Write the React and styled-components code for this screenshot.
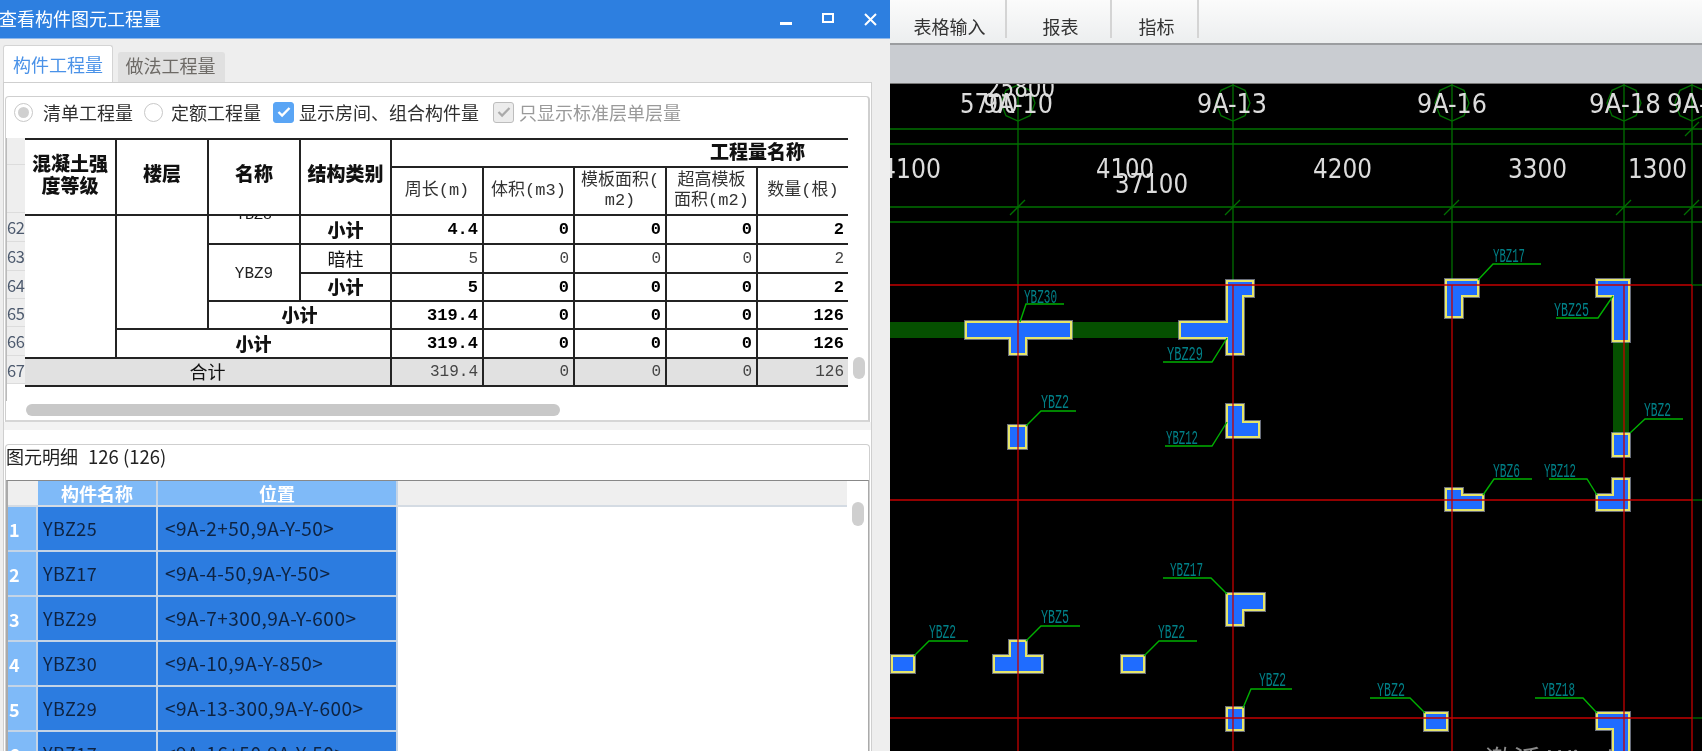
import React from 'react';
import styled, { createGlobalStyle } from 'styled-components';

const Global = createGlobalStyle`
  html, body { margin: 0; padding: 0; background: #000; overflow: hidden; }
  #root { width: 1702px; height: 751px; }
  * { box-sizing: border-box; }
`;
const CJK = '"Noto Sans CJK SC", "Noto Sans", sans-serif';
const MONO = '"Liberation Mono", "Noto Sans CJK SC", monospace';

const Page = styled.div`
  display: flex; width: 1702px; height: 751px; overflow: hidden;
  font-family: ${CJK}; filter: blur(0.35px);
`;
const Win = styled.section`
  width: 890px; flex: none; display: flex; flex-direction: column; background: #eeeeee; overflow: hidden;
`;
const TitleBar = styled.header`
  height: 39px; flex: none; display: flex; align-items: center; justify-content: space-between;
  background: #2d7fe0; border-bottom: 1px solid #8db8ec; color: #fff; font-size: 18px; margin-left: 0; padding-right: 12px;
  & > span { margin-left: -1px; margin-top: -2px; }
`;
const Controls = styled.div`display: flex; gap: 28px; align-items: center;`;
const TabBar = styled.nav`
  height: 43px; flex: none; display: flex; align-items: flex-end; gap: 5px; padding-left: 3px;
`;
const Tab = styled.div`
  display: flex; align-items: center; justify-content: center; font-size: 18px;
  width: ${p => (p.$active ? 110 : 107)}px;
  height: ${p => (p.$active ? 37 : 30)}px;
  padding: 0 ${p => (p.$active ? 0 : 2)}px ${p => (p.$active ? 0 : 5)}px 0;
  background: ${p => (p.$active ? '#fff' : '#e0e0e0')};
  color: ${p => (p.$active ? '#4a92e8' : '#6d6a66')};
  border: ${p => (p.$active ? '1px solid #d4d4d4' : 'none')};
  border-bottom: none; border-radius: 3px 3px 0 0;
`;
const Pane = styled.div`
  flex: 1; min-height: 0; margin: 0 18px 0 3px; background: #fff;
  border: 1px solid #cfcfcf; border-bottom: none; padding-top: 13px; display: flex; flex-direction: column;
`;
const SummaryGroup = styled.div`
  position: relative; height: 326px; flex: none; margin: 0 1px 0 1px;
  border: 1px solid #cfcfcf; border-bottom: 2px solid #d6d6d6; border-radius: 4px 4px 0 0;
  border-right-width: 2px; display: flex; flex-direction: column;
`;
const Options = styled.div`
  height: 41px; flex: none; display: flex; align-items: center; font-size: 18px; color: #2f2f2f; padding: 0 0 11px 8px;
`;
const Radio = styled.span`
  width: 19px; height: 19px; border-radius: 50%; border: 1px solid #c8c8c8; background: #fff;
  display: inline-flex; align-items: center; justify-content: center;
  margin-right: ${p => p.$mr}px;
  margin-left: ${p => p.$gap || 0}px;
  &::after { content: ''; width: 11px; height: 11px; border-radius: 50%; background: ${p => (p.$on ? '#d0d0d0' : 'transparent')}; }
`;
const Check = styled.span`
  width: 21px; height: 21px; border-radius: 3px; display: inline-flex; align-items: center; justify-content: center;
  background: ${p => (p.$off ? '#ececec' : '#5aa5f5')};
  border: 1px solid ${p => (p.$off ? '#bdbdbd' : '#5aa5f5')};
  margin-left: ${p => p.$gap}px; margin-right: 5px;
`;
const Muted = styled.span`color: #9a9a9a;`;
const SheetRow = styled.div`display: flex; align-items: flex-start; height: 266px; flex: none;`;
const RowHead = styled.div`
  width: 19px; flex: none; border-left: 1px solid #bbb; background: #fff; height: 263px;
`;
const RowNum = styled.div`
  height: ${p => p.$h}px; background: #eeeeee; border-bottom: 1px solid #dcdcdc; color: #4d5a6e; font-size: 16.5px;
  display: flex; align-items: center; overflow: hidden; white-space: nowrap; letter-spacing: -0.3px;
`;
const Grid = styled.table`
  width: 823px; table-layout: fixed; border-collapse: collapse; flex: none; color: #111;
  font-family: ${MONO};
`;
const Row = styled.tr`height: ${p => p.$h}px;`;
const Head = styled.th`
  border: 2px solid #232323; border-left: ${p => (p.$first ? 'none' : '2px solid #232323')};
  border-right: ${p => (p.$last ? 'none' : '2px solid #232323')};
  font-family: ${CJK}; font-size: 19px; font-weight: 900; line-height: 22px; padding: 0 0 ${p => p.$pb || 0}px; text-align: center;
  overflow: hidden; white-space: nowrap;
`;
const QuantityHead = styled(Head)`text-align: right; padding-right: 43px; padding-bottom: 4px;`;
const SubHead = styled.td`
  border: 2px solid #232323; border-right: ${p => (p.$last ? 'none' : '2px solid #232323')};
  font-size: 17px; line-height: 20px; text-align: center; padding: 0; white-space: nowrap; color: #333;
`;
const Label = styled.td`
  border: 2px solid #232323; border-left: ${p => (p.$first ? 'none' : '2px solid #232323')};
  font-family: ${CJK}; font-size: 18px; text-align: center; padding: 0 0 2px; line-height: 20px; overflow: hidden;
  font-weight: ${p => (p.$bold ? 900 : 400)}; background: ${p => (p.$total ? '#e1e1e1' : '#fff')};
  vertical-align: ${p => (p.$top ? 'top' : 'middle')};
`;
const Code = styled.span`font-family: ${MONO}; font-size: 16px; color: #222;`;
const Clipped = styled.div`
  height: 24px; overflow: hidden; font-family: ${MONO}; font-size: 15px; line-height: 16px; margin-top: -8px; padding: 0;
`;
const Num = styled.td`
  border: 2px solid #232323; border-right: ${p => (p.$last ? 'none' : '2px solid #232323')};
  text-align: right; padding: 0 4px 0 0; overflow: hidden;
  font-size: ${p => (p.$bold ? 17 : 16)}px; font-weight: ${p => (p.$bold ? 700 : 400)};
  color: ${p => (p.$bold ? '#000' : '#444')};
  background: ${p => (p.$total ? '#e1e1e1' : '#fff')};
`;
const HScroll = styled.div`
  position: absolute; left: 20px; top: 307px; width: 534px; height: 12px; border-radius: 6px; background: #c8c8c8;
`;
const VThumb = styled.div`
  position: absolute; left: ${p => p.$x}px; top: ${p => p.$y}px; width: 12px; height: ${p => p.$h}px; border-radius: 6px; background: #cfcfcf;
`;
const Splitter = styled.div`height: 8px; flex: none; background: #f3f3f3;`;
const Gap = styled.div`height: 14px; flex: none;`;
const DetailGroup = styled.div`
  position: relative; flex: 1; min-height: 0; margin: 0 1px; border: 1px solid #cfcfcf; border-bottom: none;
  border-radius: 4px 4px 0 0; display: flex; flex-direction: column; overflow: hidden;
`;
const DetailTitle = styled.div`
  height: 35px; flex: none; display: flex; align-items: center; gap: 10px; font-size: 18px; color: #222; padding: 0 0 13px 0;
`;
const DetailCount = styled.span`font-size: 18.5px;`;
const DetailFrame = styled.div`
  flex: 1; min-height: 0; border-top: 1px solid #888; border-left: 2px solid #aaa; border-right: 1px solid #aaa; overflow: hidden; position: relative;
`;
const DetailTable = styled.table`
  width: 839px; table-layout: fixed; border-collapse: collapse;
`;
const DHead = styled.th`
  height: 25px; padding: 0; font-size: 18px; line-height: 20px; font-weight: 700; color: #fff;
  background: ${p => (p.$plain ? '#efefef' : '#7fbaf8')};
  border-right: 2px solid ${p => (p.$plain ? '#efefef' : '#c4d4e6')};
  border-bottom: 2px solid #d4dbe3;
`;
const DNo = styled.td`
  height: 45px; padding: 0 0 0 1px; background: #7fbaf8; color: #fff; font-size: 18px; font-weight: 700;
  border-bottom: 2px solid #c4d4e6;
`;
const DCell = styled.td`
  height: 45px; padding: 0 0 2px ${p => p.$pad}px; background: #2c7ce0; color: #0e2342; font-size: ${p => p.$fs}px; white-space: nowrap; overflow: hidden;
  letter-spacing: ${p => p.$ls}px;
  border-left: 2px solid #c4d4e6; border-right: 2px solid #c4d4e6; border-bottom: 2px solid #c4d4e6;
`;
const Main = styled.main`flex: 1; display: flex; flex-direction: column; min-width: 0;`;
const Toolbar = styled.div`
  height: 45px; flex: none; display: flex; align-items: flex-start;
  background: linear-gradient(#fbfbfb, #eceeef); border-bottom: 2px solid #9b9da0;
`;
const ToolTab = styled.div`
  width: ${p => p.$w}px; height: 38px; display: flex; align-items: flex-end; justify-content: center;
  border-right: 2px solid #d4d4d4; font-size: 18px; color: #333; line-height: 20px; padding: 0 0 2px 4px;
`;
const Band = styled.div`height: 39px; flex: none; background: #c9ccd1; border-bottom: 1px solid #777;`;
const Cad = styled.svg`display: block; flex: 1; width: 812px; height: 667px; background: #000;`;
const DimText = styled.text`fill: #dcdcdc; font-family: "DejaVu Sans", sans-serif; font-size: 27px;`;
const TagText = styled.text`fill: #007f86; font-family: "Liberation Mono", monospace; font-size: 21px;`;
const Watermark = styled.text`fill: #8a8a8a; font-family: ${CJK}; font-size: 28px;`;

const summaryRows = [
  { n: '62', h: 29 }, { n: '63', h: 29 }, { n: '64', h: 28 }, { n: '65', h: 28 }, { n: '66', h: 29 }, { n: '67', h: 28 },
];
const Values = ({ len, count, bold, total }) => (
  <>
    <Num $bold={bold} $total={total}>{len}</Num>
    <Num $bold={bold} $total={total}>0</Num>
    <Num $bold={bold} $total={total}>0</Num>
    <Num $bold={bold} $total={total}>0</Num>
    <Num $bold={bold} $total={total} $last>{count}</Num>
  </>
);

const details = [
  ['1', 'YBZ25', '<9A-2+50,9A-Y-50>'],
  ['2', 'YBZ17', '<9A-4-50,9A-Y-50>'],
  ['3', 'YBZ29', '<9A-7+300,9A-Y-600>'],
  ['4', 'YBZ30', '<9A-10,9A-Y-850>'],
  ['5', 'YBZ29', '<9A-13-300,9A-Y-600>'],
  ['6', 'YBZ17', '<9A-16+50,9A-Y-50>'],
];

const axes = [1018, 1233, 1452, 1624, 1692];
const octagon = (cx, cy) =>
  Array.from({ length: 8 }, (_, i) => {
    const a = (Math.PI / 4) * i;
    return `${(cx + 17 * Math.sin(a)).toFixed(1)},${(cy - 18 * Math.cos(a)).toFixed(1)}`;
  }).join(' ');

const dims = [
  ['25800', 987, 97, 68], ['5700', 960, 113, 58], ['9A-10', 983, 113, 70],
  ['9A-13', 1197, 113, 70], ['9A-16', 1417, 113, 70], ['9A-18', 1589, 113, 72], ['9A-19', 1667, 113, 72],
  ['4100', 881, 178, 60], ['4100', 1096, 178, 58], ['37100', 1115, 193, 73],
  ['4200', 1313, 178, 59], ['3300', 1508, 178, 59], ['1300', 1628, 178, 59],
];
const walls = [[890, 322, 76, 16], [1071, 322, 109, 16], [1613, 341, 16, 93]];
const columns = [
  '966,322 1071,322 1071,338 1026,338 1026,354 1010,354 1010,338 966,338',
  '1227,281 1253,281 1253,296 1243,296 1243,354 1227,354 1227,338 1180,338 1180,322 1227,322',
  '1009,426 1026,426 1026,448 1009,448',
  '1227,405 1243,405 1243,422 1259,422 1259,437 1227,437',
  '1446,280 1478,280 1478,296 1462,296 1462,317 1446,317',
  '1597,280 1629,280 1629,341 1613,341 1613,296 1597,296',
  '1613,434 1629,434 1629,456 1613,456',
  '1446,489 1462,489 1462,495 1483,495 1483,510 1446,510',
  '1613,479 1629,479 1629,510 1597,510 1597,495 1613,495',
  '892,656 914,656 914,672 892,672',
  '1010,641 1026,641 1026,656 1042,656 1042,672 994,672 994,656 1010,656',
  '1122,656 1144,656 1144,672 1122,672',
  '1227,594 1264,594 1264,610 1243,610 1243,625 1227,625',
  '1227,708 1243,708 1243,730 1227,730',
  '1425,713 1447,713 1447,730 1425,730',
  '1597,713 1629,713 1629,760 1613,760 1613,729 1597,729',
];
const tags = [
  ['YBZ30', 1024, 303, 33, '1020,322 1026,304 1064,304'],
  ['YBZ29', 1167, 360, 36, '1227,338 1212,362 1163,362'],
  ['YBZ2', 1041, 408, 28, '1026,426 1041,411 1076,411'],
  ['YBZ12', 1166, 444, 32, '1227,422 1212,446 1165,446'],
  ['YBZ17', 1493, 262, 32, '1478,280 1493,264 1541,264'],
  ['YBZ25', 1554, 316, 35, '1613,296 1598,318 1556,318'],
  ['YBZ2', 1644, 416, 27, '1630,433 1645,419 1683,419'],
  ['YBZ6', 1493, 477, 27, '1483,495 1494,479 1532,479'],
  ['YBZ12', 1544, 477, 32, '1597,495 1587,479 1549,479'],
  ['YBZ2', 929, 638, 27, '914,656 929,641 968,641'],
  ['YBZ5', 1041, 623, 28, '1026,641 1041,626 1080,626'],
  ['YBZ2', 1158, 638, 27, '1144,656 1159,641 1197,641'],
  ['YBZ17', 1170, 576, 33, '1227,594 1211,578 1163,578'],
  ['YBZ2', 1259, 686, 27, '1243,708 1251,689 1292,689'],
  ['YBZ2', 1377, 696, 28, '1425,713 1410,698 1370,698'],
  ['YBZ18', 1542, 696, 33, '1597,713 1583,698 1535,698'],
];

export default function App() {
  return (
    <Page>
      <Global />
      <Win>
        <TitleBar>
          <span>查看构件图元工程量</span>
          <Controls>
            <svg width="14" height="14" viewBox="0 0 14 14"><rect x="1" y="10" width="12" height="3" fill="#fff" /></svg>
            <svg width="14" height="14" viewBox="0 0 14 14" fill="none" stroke="#fff" strokeWidth="2"><rect x="2" y="2" width="10" height="8" /></svg>
            <svg width="15" height="15" viewBox="0 0 15 15" stroke="#fff" strokeWidth="2"><path d="M2 2l11 11M13 2L2 13" /></svg>
          </Controls>
        </TitleBar>
        <TabBar>
          <Tab $active>构件工程量</Tab>
          <Tab>做法工程量</Tab>
        </TabBar>
        <Pane>
          <SummaryGroup>
            <Options>
              <Radio $on $mr={10} />
              <span>清单工程量</span>
              <Radio $gap={11} $mr={8} />
              <span>定额工程量</span>
              <Check $gap={12}>
                <svg width="14" height="12" viewBox="0 0 14 12" fill="none" stroke="#fff" strokeWidth="2.4"><path d="M1.5 6l3.6 3.6L12.5 2" /></svg>
              </Check>
              <span>显示房间、组合构件量</span>
              <Check $off $gap={14}>
                <svg width="14" height="12" viewBox="0 0 14 12" fill="none" stroke="#aaa" strokeWidth="2.2"><path d="M1.5 6l3.6 3.6L12.5 2" /></svg>
              </Check>
              <Muted>只显示标准层单层量</Muted>
            </Options>
            <SheetRow>
              <RowHead>
                <RowNum $h={27} />
                <RowNum $h={48} />
                {summaryRows.map(r => <RowNum key={r.n} $h={r.h}>{r.n}</RowNum>)}
              </RowHead>
              <Grid>
                <colgroup>
                  <col width="91" /><col width="92" /><col width="92" /><col width="91" />
                  <col width="92" /><col width="91" /><col width="92" /><col width="91" /><col width="91" />
                </colgroup>
                <tbody>
                  <Row $h={27}>
                    <Head rowSpan={2} $first $pb={6}>混凝土强<br />度等级</Head>
                    <Head rowSpan={2} $pb={8}>楼层</Head>
                    <Head rowSpan={2} $pb={8}>名称</Head>
                    <Head rowSpan={2} $pb={8}>结构类别</Head>
                    <QuantityHead colSpan={5} $last>工程量名称</QuantityHead>
                  </Row>
                  <Row $h={48}>
                    <SubHead>周长(m)</SubHead>
                    <SubHead>体积(m3)</SubHead>
                    <SubHead>模板面积(<br />m2)</SubHead>
                    <SubHead>超高模板<br />面积(m2)</SubHead>
                    <SubHead $last>数量(根)</SubHead>
                  </Row>
                  <Row $h={29}>
                    <Label rowSpan={5} $first />
                    <Label rowSpan={4} />
                    <Label $top><Clipped>YBZ8</Clipped></Label>
                    <Label $bold>小计</Label>
                    <Values len="4.4" count="2" bold />
                  </Row>
                  <Row $h={29}>
                    <Label rowSpan={2}><Code>YBZ9</Code></Label>
                    <Label>暗柱</Label>
                    <Values len="5" count="2" />
                  </Row>
                  <Row $h={28}>
                    <Label $bold>小计</Label>
                    <Values len="5" count="2" bold />
                  </Row>
                  <Row $h={28}>
                    <Label colSpan={2} $bold>小计</Label>
                    <Values len="319.4" count="126" bold />
                  </Row>
                  <Row $h={29}>
                    <Label colSpan={3} $bold>小计</Label>
                    <Values len="319.4" count="126" bold />
                  </Row>
                  <Row $h={28}>
                    <Label colSpan={4} $first $total>合计</Label>
                    <Values len="319.4" count="126" total />
                  </Row>
                </tbody>
              </Grid>
            </SheetRow>
            <HScroll />
            <VThumb $x={847} $y={260} $h={22} />
          </SummaryGroup>
          <Splitter />
          <Gap />
          <DetailGroup>
            <DetailTitle><span>图元明细</span><DetailCount>126 (126)</DetailCount></DetailTitle>
            <DetailFrame>
              <DetailTable>
                <colgroup><col width="29" /><col width="120" /><col width="240" /><col /></colgroup>
                <thead>
                  <tr>
                    <DHead $plain />
                    <DHead>构件名称</DHead>
                    <DHead>位置</DHead>
                    <DHead $plain />
                  </tr>
                </thead>
                <tbody>
                  {details.map(([n, name, pos]) => (
                    <tr key={n}>
                      <DNo>{n}</DNo>
                      <DCell $pad={5} $fs={18} $ls={0.4}>{name}</DCell>
                      <DCell $pad={7} $fs={19} $ls={0.5}>{pos}</DCell>
                      <td />
                    </tr>
                  ))}
                </tbody>
              </DetailTable>
              <VThumb $x={844} $y={21} $h={24} />
            </DetailFrame>
          </DetailGroup>
        </Pane>
      </Win>
      <Main>
        <Toolbar>
          <ToolTab $w={117}>表格输入</ToolTab>
          <ToolTab $w={105}>报表</ToolTab>
          <ToolTab $w={87}>指标</ToolTab>
        </Toolbar>
        <Band />
        <Cad viewBox="890 84 812 667" preserveAspectRatio="none">
          <g stroke="#007000" strokeWidth="1.3" fill="none">
            {[129, 144, 207, 222].map(y => <line key={y} x1="890" x2="1702" y1={y} y2={y} />)}
            {axes.map(x => <line key={x} x1={x} x2={x} y1="84" y2="285" />)}
            {axes.map(x => <polygon key={x} points={octagon(x, 103)} />)}
            {axes.map(x => <line key={x} x1={x - 8} y1="215" x2={x + 7} y2="200" />)}
            <line x1="1685" y1="136" x2="1699" y2="122" />
            {[285, 500, 718].map(y => <line key={y} x1="1692" x2="1702" y1={y} y2={y} />)}
          </g>
          {walls.map(([x, y, w, h]) => <rect key={x} x={x} y={y} width={w} height={h} fill="#055000" />)}
          {columns.map(p => <polygon key={`glow${p}`} points={p} fill="none" stroke="#aeb6cc" strokeWidth="4" strokeOpacity="0.6" />)}
          {columns.map(p => <polygon key={p} points={p} fill="#1f6cff" stroke="#e6e66a" strokeWidth="2" />)}
          <g stroke="#c40000" strokeWidth="1.3">
            {[285, 500, 718].map(y => <line key={y} x1="890" x2="1692" y1={y} y2={y} />)}
            {axes.map(x => <line key={x} x1={x} x2={x} y1="285" y2="751" />)}
          </g>
          {tags.map(([t, x, y, len, pts]) => (
            <g key={`${t}${x}`}>
              <polyline points={pts} fill="none" stroke="#00b000" strokeWidth="1.4" />
              <TagText x={x} y={y} textLength={len} lengthAdjust="spacingAndGlyphs">{t}</TagText>
            </g>
          ))}
          {dims.map(([t, x, y, len]) => (
            <DimText key={`${t}${x}`} x={x} y={y} textLength={len} lengthAdjust="spacingAndGlyphs">{t}</DimText>
          ))}
          <Watermark x="1485" y="771">激活 Windows</Watermark>
        </Cad>
      </Main>
    </Page>
  );
}
